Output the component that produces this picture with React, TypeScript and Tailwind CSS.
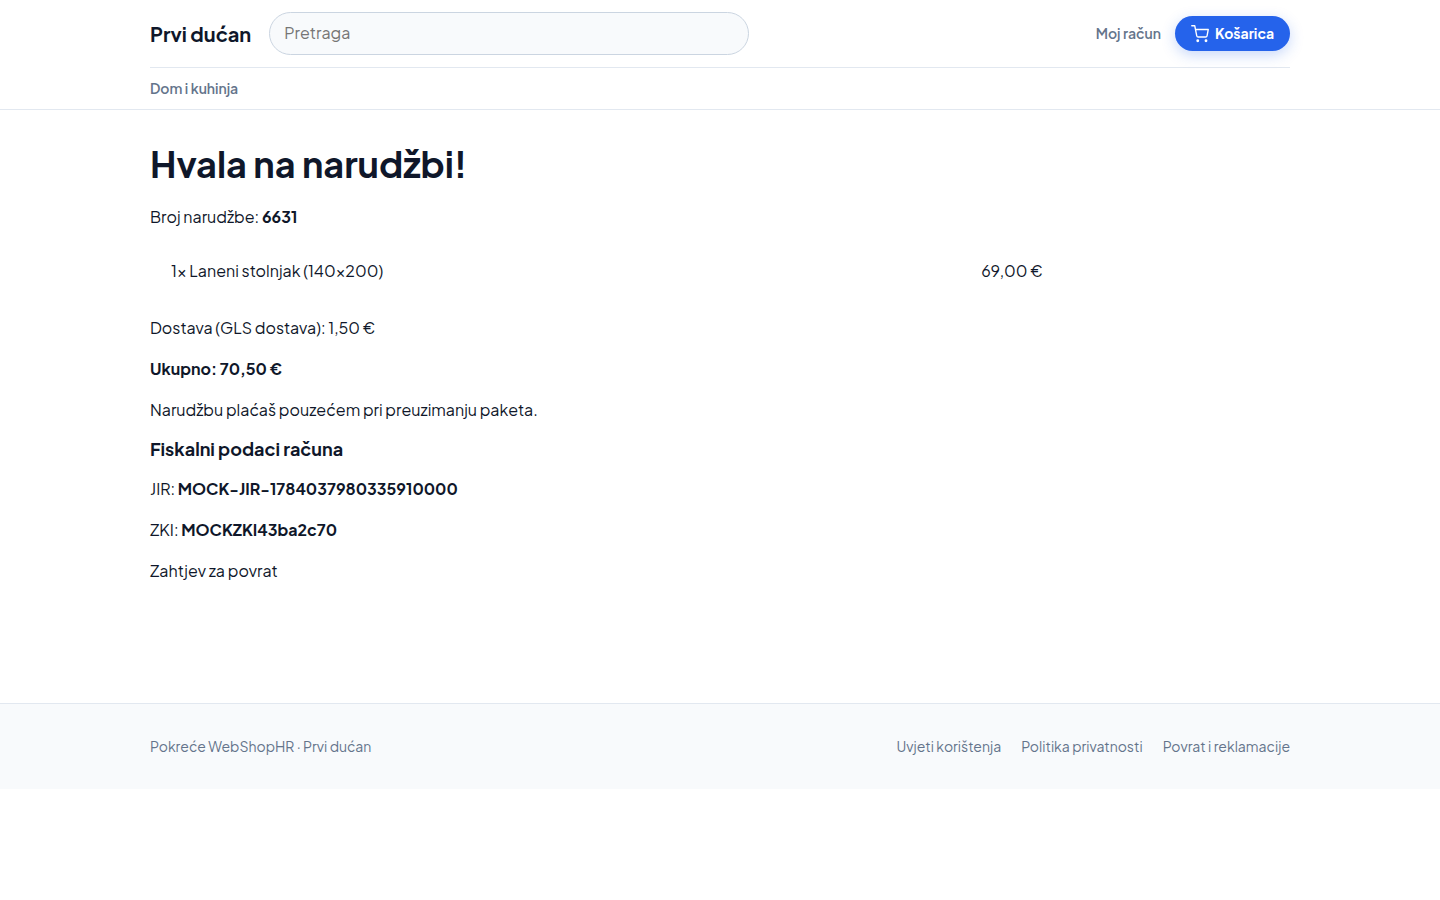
import React from 'react'

const footerLinks = ['Uvjeti korištenja', 'Politika privatnosti', 'Povrat i reklamacije']

const Container = ({ children, className = '' }: { children: React.ReactNode; className?: string }) => (
    <div className={`mx-auto w-full max-w-[1180px] px-5 ${className}`}>{children}</div>
)

const CartIcon = () => (
    <svg width="18" height="18" viewBox="0 0 24 24" fill="none" stroke="currentColor" strokeWidth="1.8" strokeLinecap="round" strokeLinejoin="round" aria-hidden="true">
        <circle cx="9" cy="21" r="1" fill="currentColor" />
        <circle cx="20" cy="21" r="1" fill="currentColor" />
        <path d="M1 1h4l2.68 13.39a2 2 0 0 0 2 1.61h9.72a2 2 0 0 0 2-1.61L23 6H6" />
    </svg>
)

const Header = () => {
    return (
        <header className="border-b border-[#e2e8f0] bg-white">
            <Container>
                <div className="flex items-center gap-[18px] py-3">
                    <a href="#" className="text-xl leading-6 font-bold whitespace-nowrap">Prvi dućan</a>
                    <form className="w-full max-w-[480px]">
                        <input
                            type="search"
                            placeholder="Pretraga"
                            aria-label="Pretraga"
                            className="block h-[43px] w-full rounded-full border border-[#cbd5e1] bg-[#f8fafc] px-3.5 pb-0.5 text-base placeholder:text-[#757575]"
                        />
                    </form>
                    <div className="ml-auto flex items-center gap-3.5 text-sm leading-[21px] whitespace-nowrap">
                        <a href="#" className="font-semibold text-[#64748b]">Moj račun</a>
                        <a href="#" className="flex h-[35px] items-center gap-1.5 rounded-full bg-[#2563eb] px-4 font-bold text-white shadow-[0_4px_14px_rgba(37,99,235,0.25)]">
                            <CartIcon />
                            Košarica
                        </a>
                    </div>
                </div>
                <nav className="flex border-t border-[#e2e8f0] py-2.5">
                    <a href="#" className="text-sm leading-[21px] font-semibold text-[#64748b]">Dom i kuhinja</a>
                </nav>
            </Container>
        </header>
    )
}

const Order = () => {
    return (
        <main>
            <Container className="flex flex-col gap-4 pt-8 pb-30">
                <h1 className="mb-0.5 text-4xl leading-[44px] font-bold">Hvala na narudžbi!</h1>
                <p>Broj narudžbe: <strong>6631</strong></p>
                <table className="mt-[13px] mb-4 w-full">
                    <tbody>
                        <tr>
                            <td className="px-[21px]">1× Laneni stolnjak (140×200)</td>
                            <td className="px-[21px]">69,00 €</td>
                        </tr>
                    </tbody>
                </table>
                <p>Dostava (GLS dostava): 1,50 €</p>
                <p><strong>Ukupno: 70,50 €</strong></p>
                <p>Narudžbu plaćaš pouzećem pri preuzimanju paketa.</p>
                <h2 className="text-lg leading-[22px] font-bold">Fiskalni podaci računa</h2>
                <p>JIR: <strong>MOCK-JIR-1784037980335910000</strong></p>
                <p>ZKI: <strong>MOCKZKI43ba2c70</strong></p>
                <p><a href="#">Zahtjev za povrat</a></p>
            </Container>
        </main>
    )
}

const Footer = () => {
    return (
        <footer className="border-t border-[#e2e8f0] bg-[#f8fafc]">
            <Container className="flex items-center justify-between py-8 text-sm leading-[21px] text-[#64748b]">
                <span>Pokreće WebShopHR · Prvi dućan</span>
                <nav className="flex gap-5">
                    {footerLinks.map((link) => (
                        <a key={link} href="#">{link}</a>
                    ))}
                </nav>
            </Container>
        </footer>
    )
}

const App = () => {
    return (
        <div className="bg-white font-['Plus_Jakarta_Sans','Inter',sans-serif] text-base leading-[25px] text-[#0f172a]">
            <Header />
            <Order />
            <Footer />
        </div>
    )
}

export default App
